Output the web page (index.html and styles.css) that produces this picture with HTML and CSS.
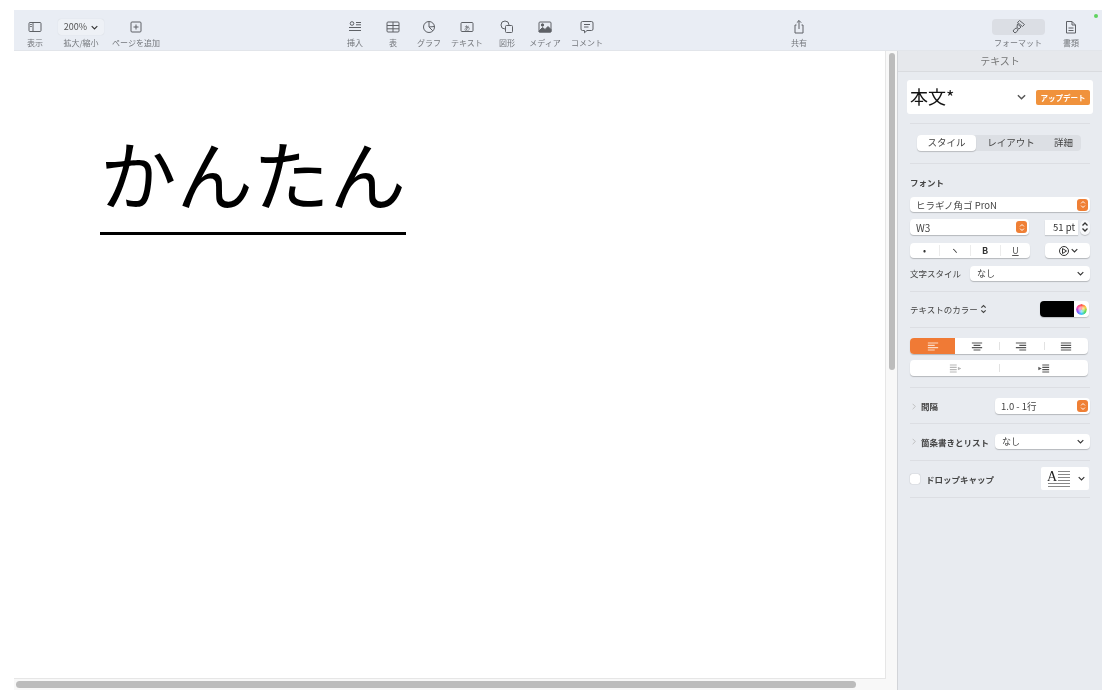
FILE: index.html
```html
<!DOCTYPE html>
<html lang="ja">
<head>
    <meta charset="UTF-8">
    <title>かんたん</title>
    <link rel="stylesheet" href="styles.css">
</head>
<body>
    <svg class="defs" width="0" height="0">
        <symbol id="chev" viewBox="0 0 10 6"><path d="M1 1l4 4 4-4" fill="none" stroke="currentColor" stroke-width="1.600"/></symbol>
        <symbol id="updown" viewBox="0 0 8 11"><path d="M1.500 4L4 1.500 6.500 4M1.500 7L4 9.500 6.500 7" fill="none" stroke="currentColor" stroke-width="1.300"/></symbol>
    </svg>
    <div class="window">
        <div class="toolbar">
            <span class="dot"></span>
            <div class="tool w42">
                <svg class="ico" viewBox="0 0 16 16"><rect x="2" y="3.500" width="12" height="9" rx="1"/><path d="M6 3.500v9M3.200 5.500h1.600M3.200 7.500h1.600"/></svg>
                <span>表示</span>
            </div>
            <div class="tool w50">
                <div class="zoom">200% <svg class="chev-s"><use href="#chev"/></svg></div>
                <span>拡大/縮小</span>
            </div>
            <div class="tool w60">
                <svg class="ico" viewBox="0 0 16 16"><rect x="3" y="3" width="10" height="10" rx="1"/><path d="M8 5.500v5M5.500 8h5"/></svg>
                <span>ページを追加</span>
            </div>
            <div class="tool w38 gap-a">
                <svg class="ico" viewBox="0 0 16 16"><circle cx="5" cy="4.500" r="1.800"/><path d="M9 3.500h5M9 5.800h5M2 8.500h12M2 11.500h12"/></svg>
                <span>挿入</span>
            </div>
            <div class="tool w38">
                <svg class="ico" viewBox="0 0 16 16"><rect x="2" y="3" width="12" height="10" rx="1"/><path d="M2 6.500h12M2 9.800h12M8 3v10"/></svg>
                <span>表</span>
            </div>
            <div class="tool w34">
                <svg class="ico" viewBox="0 0 16 16"><circle cx="8" cy="8" r="5.500"/><path d="M8 2.500V8l3.800 3.800M8 8l5.500-.5"/></svg>
                <span>グラフ</span>
            </div>
            <div class="tool w42">
                <svg class="ico" viewBox="0 0 16 16"><rect x="2" y="3.500" width="12" height="9" rx="1"/><text x="5" y="10.500" class="ico-text">あ</text></svg>
                <span>テキスト</span>
            </div>
            <div class="tool w38">
                <svg class="ico" viewBox="0 0 16 16"><circle cx="6" cy="6" r="4"/><rect x="6.500" y="6.500" width="7" height="7" rx="1" fill="#e9edf4"/></svg>
                <span>図形</span>
            </div>
            <div class="tool w38">
                <svg class="ico" viewBox="0 0 16 16"><rect x="2" y="3" width="12" height="10" rx="1"/><path d="M2 12l3.500-3.500L8 10.500l3-3 3 3V13H2z" fill="currentColor"/><circle cx="5.500" cy="6" r="1.200" fill="currentColor"/></svg>
                <span>メディア</span>
            </div>
            <div class="tool w46">
                <svg class="ico" viewBox="0 0 16 16"><path d="M3.500 2.500h9a1.500 1.500 0 0 1 1.500 1.500v6a1.500 1.500 0 0 1-1.500 1.500H8l-2.500 2.300v-2.300h-2A1.500 1.500 0 0 1 2 10V4a1.500 1.500 0 0 1 1.500-1.500z"/><path d="M5 5.500h6M5 8h4.500"/></svg>
                <span>コメント</span>
            </div>
            <div class="tool w40 gap-b">
                <svg class="ico" viewBox="0 0 16 16"><path d="M5.500 6H4v8h8V6h-1.500M8 10V1.500M5.800 3.700L8 1.500l2.200 2.200"/></svg>
                <span>共有</span>
            </div>
            <div class="tool w56 gap-c">
                <div class="format-on">
                    <svg class="ico" viewBox="0 0 16 16"><path d="M9.500 1.500l5 4-2 2-5-4zM7.500 5l3.500 3-2 2-1-.5-.5 2.500-2.500 2-2-2 2-2.500 2.500-.5-.5-1z"/></svg>
                </div>
                <span>フォーマット</span>
            </div>
            <div class="tool w50">
                <svg class="ico" viewBox="0 0 16 16"><path d="M3.500 2.500h5.500l3.500 3.500v8h-9zM9 2.500V6h3.500M5.500 9h5M5.500 11.500h5"/></svg>
                <span>書類</span>
            </div>
        </div>

        <div class="body">
            <div class="doc-area">
                <div class="doc-row">
                    <div class="canvas">
                        <div class="big-text">かんたん</div>
                    </div>
                    <div class="v-gutter"><div class="v-thumb"></div></div>
                </div>
                <div class="h-gutter"><div class="h-thumb"></div></div>
            </div>

            <div class="panel">
                <div class="panel-head">テキスト</div>

                <div class="sec sec-style">
                    <div class="style-card">
                        <span class="style-name">本文*</span>
                        <svg class="chev-m"><use href="#chev"/></svg>
                        <span class="update">アップデート</span>
                    </div>
                </div>

                <div class="sec sec-tabs">
                    <div class="tabs">
                        <span class="tab tab-on">スタイル</span>
                        <span class="tab tab-mid">レイアウト</span>
                        <span class="tab tab-last">詳細</span>
                    </div>
                </div>

                <div class="sec sec-font">
                    <div class="label-bold">フォント</div>
                    <div class="ctl font-pop">
                        <span>ヒラギノ角ゴ ProN</span>
                        <span class="orange"><svg><use href="#updown"/></svg></span>
                    </div>
                    <div class="row-weight">
                        <div class="ctl weight">
                            <span>W3</span>
                            <span class="orange"><svg><use href="#updown"/></svg></span>
                        </div>
                        <div class="size-field">51 pt</div>
                        <span class="stepper"><svg><use href="#updown"/></svg></span>
                    </div>
                    <div class="row-biu">
                        <div class="ctl biu">
                            <span class="cell">•</span>
                            <span class="cell">ヽ</span>
                            <span class="cell bold">B</span>
                            <span class="cell under">U</span>
                        </div>
                        <div class="ctl more">
                            <svg class="ico-s" viewBox="0 0 12 12"><circle cx="6" cy="6" r="4.500"/><path d="M4.500 3.500L8.500 6l-4 2.500z"/></svg>
                            <svg class="chev-s"><use href="#chev"/></svg>
                        </div>
                    </div>
                    <div class="row-cstyle">
                        <span class="small-label">文字スタイル</span>
                        <div class="ctl cstyle">
                            <span>なし</span>
                            <svg class="chev-s"><use href="#chev"/></svg>
                        </div>
                    </div>
                </div>

                <div class="sec sec-color">
                    <span class="small-label">テキストのカラー <svg class="updown-s"><use href="#updown"/></svg></span>
                    <div class="well">
                        <span class="well-black"></span>
                        <span class="well-end"><span class="wheel"></span></span>
                    </div>
                </div>

                <div class="sec sec-align">
                    <div class="ctl seg">
                        <span class="seg-cell seg-on"><svg viewBox="0 0 14 10"><path d="M1 1h12M1 3.700h8M1 6.300h12M1 9h8"/></svg></span>
                        <span class="seg-cell"><svg viewBox="0 0 14 10"><path d="M1 1h12M3 3.700h8M1 6.300h12M3 9h8"/></svg></span>
                        <span class="seg-cell"><svg viewBox="0 0 14 10"><path d="M1 1h12M5 3.700h8M1 6.300h12M5 9h8"/></svg></span>
                        <span class="seg-cell"><svg viewBox="0 0 14 10"><path d="M1 1h12M1 3.700h12M1 6.300h12M1 9h12"/></svg></span>
                    </div>
                    <div class="ctl seg seg-indent">
                        <span class="seg-cell seg-off"><svg viewBox="0 0 14 10"><path d="M1 1h8M1 3.700h8M1 6.300h8M1 9h8"/><path d="M11 4l2 1-2 1z" fill="currentColor"/></svg></span>
                        <span class="seg-cell"><svg viewBox="0 0 14 10"><path d="M5 1h8M5 3.700h8M5 6.300h8M5 9h8"/><path d="M1 4l2 1-2 1z" fill="currentColor"/></svg></span>
                    </div>
                </div>

                <div class="sec sec-spacing">
                    <span class="disclose"><svg class="chev-r" viewBox="0 0 6 10"><path d="M1 1l4 4-4 4"/></svg><b>間隔</b></span>
                    <div class="ctl spacing">
                        <span>1.0 - 1行</span>
                        <span class="orange"><svg><use href="#updown"/></svg></span>
                    </div>
                </div>

                <div class="sec sec-bullets">
                    <span class="disclose"><svg class="chev-r" viewBox="0 0 6 10"><path d="M1 1l4 4-4 4"/></svg><b>箇条書きとリスト</b></span>
                    <div class="ctl bullets">
                        <span>なし</span>
                        <svg class="chev-s"><use href="#chev"/></svg>
                    </div>
                </div>

                <div class="sec sec-drop">
                    <span class="check"></span>
                    <b class="drop-label">ドロップキャップ</b>
                    <div class="ctl drop">
                        <svg class="drop-ico" viewBox="0 0 24 18"><text x="0" y="11" class="drop-a">A</text><path d="M11 1.500h12M11 4.500h12M11 7.500h12M11 10.500h12M1 13.500h22M1 16.500h22"/></svg>
                        <svg class="chev-s"><use href="#chev"/></svg>
                    </div>
                </div>
            </div>
        </div>
    </div>
</body>
</html>
```

FILE: styles.css
```css
* {
    margin: 0;
    padding: 0;
    box-sizing: border-box;
}

body {
    background-color: #fff;
    font-family: "Noto Sans CJK JP", "Noto Sans", sans-serif;
    color: #333;
    height: 698px;
    overflow: hidden;
}

.defs {
    position: absolute;
}

.window {
    margin: 10px 11px 0 14px;
    width: 1088px;
    height: 680px;
    display: flex;
    flex-direction: column;
    filter: blur(0.3px);
}

/* toolbar */
.toolbar {
    position: relative;
    height: 41px;
    display: flex;
    background-color: #e9edf4;
    border-bottom: 1px solid #e2e5ea;
}

.dot {
    position: absolute;
    top: 4px;
    right: 4px;
    width: 4px;
    height: 4px;
    border-radius: 50%;
    background-color: #5fd35f;
}

.tool {
    height: 40px;
    padding-top: 9px;
    display: flex;
    flex-direction: column;
    align-items: center;
    font-size: 8px;
    line-height: 12px;
    color: #74777c;
    white-space: nowrap;
}

.tool > span {
    margin-top: 2px;
}

.w34 { width: 34px; }
.w38 { width: 38px; }
.w40 { width: 40px; }
.w42 { width: 42px; }
.w46 { width: 46px; }
.w50 { width: 50px; }
.w56 { width: 56px; }
.w60 { width: 60px; }
.gap-a { margin-left: 170px; }
.gap-b { margin-left: 169px; }
.gap-c { margin-left: 171px; }

.ico {
    width: 16px;
    height: 16px;
    fill: none;
    stroke: #5e6166;
    color: #5e6166;
    stroke-width: 1;
}

.ico-text {
    font-size: 6px;
    fill: #5e6166;
    stroke: none;
}

.zoom {
    width: 46px;
    height: 16px;
    border-radius: 3px;
    background-color: #eef1f6;
    box-shadow: 0 0 1px rgba(0, 0, 0, 0.15);
    font-size: 9px;
    line-height: 16px;
    color: #555;
    display: flex;
    align-items: center;
    justify-content: center;
    gap: 4px;
}

.format-on {
    width: 53px;
    height: 16px;
    border-radius: 4px;
    background-color: #dbdee4;
    display: flex;
    justify-content: center;
}

.chev-s {
    width: 7px;
    height: 5px;
    color: #333;
    flex-shrink: 0;
}

/* document */
.body {
    flex: 1;
    display: flex;
    min-height: 0;
}

.doc-area {
    width: 883px;
    display: flex;
    flex-direction: column;
    background-color: #f8f8f8;
}

.doc-row {
    flex: 1;
    display: flex;
    min-height: 0;
}

.canvas {
    flex: 1;
    background-color: #fff;
    border-right: 1px solid #e6e6e6;
    border-bottom: 1px solid #e6e6e6;
    padding: 64px 0 0 86px;
}

.big-text {
    width: 306px;
    padding-bottom: 4px;
    font-size: 76.500px;
    line-height: 113px;
    color: #000;
    white-space: nowrap;
    border-bottom: 3px solid #000;
}

.v-gutter {
    width: 11px;
    padding: 2px 2px 0 3px;
}

.v-thumb {
    width: 6px;
    height: 317px;
    border-radius: 3px;
    background-color: #bcbcbc;
}

.h-gutter {
    height: 11px;
    padding: 2px 2px;
}

.h-thumb {
    width: 840px;
    height: 7px;
    border-radius: 4px;
    background-color: #bcbcbc;
}

/* panel */
.panel {
    width: 205px;
    background-color: #e8ebf0;
    border-left: 1px solid #d2d4d8;
    padding-bottom: 4px;
}

.panel-head {
    height: 21px;
    text-align: center;
    font-size: 10px;
    line-height: 20px;
    color: #777;
    background-color: #e6e8ec;
    border-bottom: 1px solid #d9dbdf;
}

.sec {
    margin: 0 12px;
    border-bottom: 1px solid #dcdee3;
}

.sec-style {
    padding: 8px 0 9px;
}

.style-card {
    height: 34px;
    margin: 0 -3px;
    padding: 0 3px;
    background-color: #fff;
    border-radius: 3px;
    display: flex;
    align-items: center;
}

.style-name {
    font-size: 18px;
    line-height: 32px;
    height: 34px;
    color: #111;
    flex: 1;
}

.chev-m {
    width: 9px;
    height: 6px;
    color: #555;
    margin-right: 10px;
}

.update {
    width: 54px;
    height: 15px;
    border-radius: 2px;
    background-color: #f0923c;
    color: #fff;
    font-size: 7.500px;
    font-weight: 700;
    line-height: 15px;
    text-align: center;
}

.sec-tabs {
    padding: 11px 0 12px;
}

.tabs {
    width: 164px;
    height: 16px;
    margin-left: 7px;
    border-radius: 4px;
    background-color: #dcdfe4;
    display: flex;
    font-size: 9.500px;
    line-height: 15px;
    color: #444;
}

.tab {
    text-align: center;
}

.tab-on {
    width: 59px;
    background-color: #fff;
    border-radius: 4px;
    box-shadow: 0 1px 1px rgba(0, 0, 0, 0.2);
}

.tab-mid {
    width: 70px;
}

.tab-last {
    width: 35px;
}

.label-bold {
    font-size: 8.500px;
    font-weight: 700;
    line-height: 10px;
    color: #444;
}

.small-label {
    font-size: 8.500px;
    line-height: 15px;
    color: #444;
    white-space: nowrap;
}

.ctl {
    background-color: #fff;
    border-radius: 4px;
    box-shadow: 0 1px 1px rgba(0, 0, 0, 0.22);
    font-size: 9.500px;
    color: #444;
    display: flex;
    align-items: center;
    white-space: nowrap;
}

.orange {
    width: 11px;
    height: 12px;
    margin-left: auto;
    border-radius: 3px;
    background-color: #ef7f35;
    color: #fff;
    display: flex;
    align-items: center;
    justify-content: center;
}

.orange svg {
    width: 6px;
    height: 9px;
}

.sec-font {
    padding: 13px 0 10px;
}

.font-pop {
    height: 15px;
    margin-top: 10px;
    padding: 0 2px 0 6px;
}

.row-weight {
    height: 16px;
    margin-top: 7px;
    display: flex;
    align-items: center;
}

.weight {
    width: 119px;
    height: 16px;
    padding: 0 2px 0 6px;
    font-size: 10px;
}

.size-field {
    width: 33px;
    height: 15px;
    margin-left: 16px;
    background-color: #fff;
    box-shadow: 0 1px 1px rgba(0, 0, 0, 0.15);
    font-size: 9.500px;
    line-height: 15px;
    text-align: right;
    padding-right: 3px;
    color: #333;
}

.stepper {
    width: 10px;
    height: 15px;
    margin-left: 2px;
    border-radius: 5px;
    background-color: #f7f8fa;
    box-shadow: 0 1px 1px rgba(0, 0, 0, 0.18);
    color: #333;
    display: flex;
    align-items: center;
    justify-content: center;
}

.stepper svg {
    width: 8px;
    height: 12px;
}

.row-biu {
    height: 15px;
    margin-top: 8px;
    display: flex;
    justify-content: space-between;
}

.biu {
    width: 120px;
}

.cell {
    flex: 1;
    text-align: center;
    font-size: 9px;
    line-height: 11px;
    color: #333;
    border-right: 1px solid #ececec;
}

.cell:last-child {
    border-right: none;
}

.bold {
    font-weight: 700;
}

.under {
    text-decoration: underline;
    color: #555;
}

.more {
    width: 45px;
    justify-content: center;
    gap: 1px;
}

.ico-s {
    width: 12px;
    height: 12px;
    fill: none;
    stroke: #333;
    color: #333;
}

.row-cstyle {
    height: 15px;
    margin-top: 8px;
    display: flex;
    justify-content: space-between;
}

.cstyle,
.bullets {
    height: 15px;
    padding: 0 6px 0 7px;
    font-size: 9px;
    justify-content: space-between;
}

.cstyle {
    width: 120px;
}

.sec-color {
    padding: 9px 0 10px;
    height: 36px;
    display: flex;
    justify-content: space-between;
    align-items: center;
}

.updown-s {
    width: 7px;
    height: 10px;
    vertical-align: -1px;
    color: #444;
}

.well {
    width: 49px;
    height: 16px;
    margin-right: 1px;
    border-radius: 4px;
    overflow: hidden;
    display: flex;
    box-shadow: 0 1px 1px rgba(0, 0, 0, 0.2);
}

.well-black {
    width: 34px;
    background-color: #000;
}

.well-end {
    flex: 1;
    background-color: #fff;
    display: flex;
    align-items: center;
    justify-content: center;
}

.wheel {
    width: 11px;
    height: 11px;
    border-radius: 50%;
    background: conic-gradient(#f55, #fc4, #5d5, #4cf, #85f, #f5a, #f55);
    -webkit-mask: radial-gradient(circle, #fff8 2.500px, #000 4px);
    mask: radial-gradient(circle, #fff8 2.500px, #000 4px);
}

.sec-align {
    padding: 10px 0 11px;
}

.seg {
    width: 178px;
    height: 16px;
    overflow: hidden;
}

.seg-indent {
    margin-top: 6px;
}

.seg-cell {
    flex: 1;
    height: 16px;
    display: flex;
    align-items: center;
    justify-content: center;
    color: #555;
    position: relative;
}

.seg-cell svg {
    width: 12px;
    height: 9px;
    fill: none;
    stroke: currentColor;
    stroke-width: 1.200;
}

.seg-cell + .seg-cell::before {
    content: "";
    position: absolute;
    left: 0;
    top: 4px;
    width: 1px;
    height: 8px;
    background-color: #e2e2e2;
}

.seg-on {
    flex: none;
    width: 45px;
    background-color: #f07a35;
    color: #fbd9c4;
}

.seg-on + .seg-cell::before {
    display: none;
}

.seg-off {
    color: #b8b8b8;
}

.sec-spacing {
    padding: 10px 0 9px;
    display: flex;
    align-items: center;
    justify-content: space-between;
}

.sec-bullets {
    padding: 10px 0 11px;
    display: flex;
    align-items: center;
    justify-content: space-between;
}

.disclose {
    display: flex;
    align-items: center;
    font-size: 8.500px;
    color: #444;
    white-space: nowrap;
}

.chev-r {
    width: 4px;
    height: 7px;
    margin: 0 5px 0 2px;
    fill: none;
    stroke: #aaa;
}

.spacing {
    width: 95px;
    height: 16px;
    padding: 0 2px 0 6px;
}

.bullets {
    width: 95px;
}

.sec-drop {
    height: 37px;
    padding: 6px 0 7px;
    display: flex;
    align-items: center;
}

.check {
    width: 10px;
    height: 10px;
    border-radius: 2px;
    background-color: #fff;
    box-shadow: 0 0 1px rgba(0, 0, 0, 0.4);
}

.drop-label {
    margin-left: 6px;
    font-size: 8.500px;
    color: #444;
}

.drop {
    width: 48px;
    height: 23px;
    margin-left: auto;
    margin-right: 1px;
    padding-left: 6px;
    border-radius: 2px;
    box-shadow: none;
    gap: 7px;
}

.drop-ico {
    width: 24px;
    height: 18px;
    fill: none;
    stroke: #888;
}

.drop-a {
    font-family: "Liberation Serif", serif;
    font-size: 14px;
    fill: #222;
    stroke: none;
}
```
